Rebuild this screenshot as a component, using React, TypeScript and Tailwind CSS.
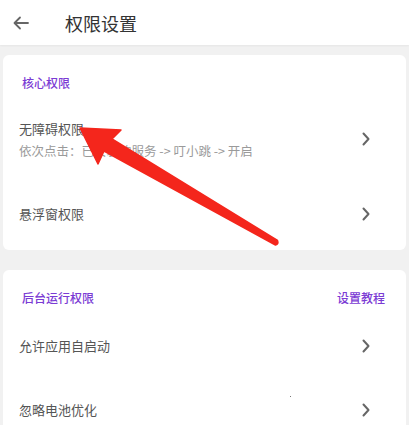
import React from "react";

const font = { fontFamily: '"Noto Sans CJK SC", "Noto Sans", sans-serif' };

function Chevron() {
  return (
    <svg width="10" height="14" viewBox="0 0 10 14" className="shrink-0">
      <path d="M2.5 1.5 L7.5 7 L2.5 12.5" fill="none" stroke="#666" strokeWidth="2" strokeLinecap="round" strokeLinejoin="round" />
    </svg>
  );
}

function SectionHead({ title, action }: { title: string; action?: string }) {
  return (
    <div className="flex items-center justify-between pl-[19px] pr-[21px] pt-[21px] pb-[9px] text-[12px] leading-[14px] font-medium text-[#7b3bd4]">
      <span>{title}</span>
      {action ? <span>{action}</span> : null}
    </div>
  );
}

export default function App() {
  return (
    <div className="relative h-[425px] w-[409px] overflow-hidden bg-[#f1f1f1]" style={font}>
      <header className="flex h-[45px] items-center bg-white shadow-[0_1px_2px_rgba(0,0,0,0.05)]">
        <svg width="18" height="14" viewBox="0 0 18 14" className="ml-[12px]">
          <path d="M16 7 H3 M8 1.5 L2.5 7 L8 12.5" fill="none" stroke="#666" strokeWidth="1.8" strokeLinecap="round" strokeLinejoin="round" />
        </svg>
        <h1 className="ml-[35px] text-[18px] leading-[24px] text-[#333]">权限设置</h1>
      </header>

      <div className="px-[3px] pt-[10px]">
        <section className="h-[195px] rounded-[6px] bg-white">
          <SectionHead title="核心权限" />
          <div className="mt-[12px] flex h-[56px] items-center justify-between pl-[16px] pr-[35px]">
            <div>
              <div className="text-[13px] leading-[18px] text-[#555]">无障碍权限</div>
              <div className="mt-[5px] text-[12.5px] leading-[16px] text-[#9a9a9a]">依次点击：已安装的服务 -&gt; 叮小跳 -&gt; 开启</div>
            </div>
            <Chevron />
          </div>
          <div className="flex h-[83px] items-center justify-between pt-[11px] pl-[16px] pr-[35px]">
            <span className="text-[13px] leading-[18px] text-[#555]">悬浮窗权限</span>
            <Chevron />
          </div>
        </section>

        <section className="mt-[20px] h-[200px] rounded-[6px] bg-white">
          <SectionHead title="后台运行权限" action="设置教程" />
          <div className="flex h-[64px] items-center justify-between pl-[16px] pr-[35px]">
            <span className="text-[13px] leading-[18px] text-[#555]">允许应用自启动</span>
            <Chevron />
          </div>
          <div className="flex h-[64px] items-center justify-between pl-[16px] pr-[35px]">
            <span className="text-[13px] leading-[18px] text-[#555]">忽略电池优化</span>
            <Chevron />
          </div>
        </section>
      </div>

      <span className="absolute left-[290px] top-[396px] h-[1px] w-[1px] bg-[#777]" />

      <svg className="pointer-events-none absolute left-0 top-0" width="409" height="425" viewBox="0 0 409 425">
        <path
          d="M80 128 L121 130 L112 139 L277.5 240.5 Q279 244 275.5 245 L104 151 L98 164 Z"
          fill="#f4261c"
          stroke="#f4261c"
          strokeWidth="1.5"
          strokeLinejoin="round"
        />
      </svg>
    </div>
  );
}
